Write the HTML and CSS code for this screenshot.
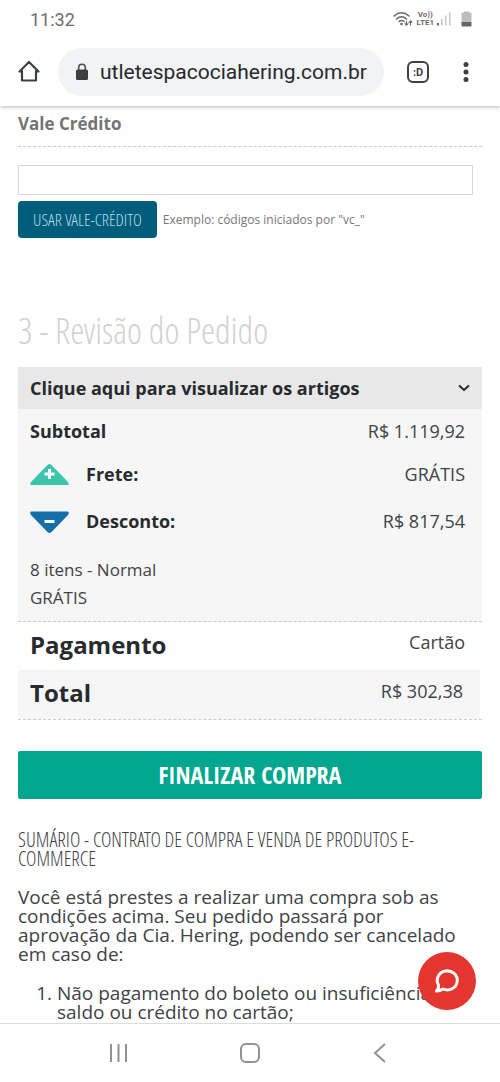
FILE: index.html
```html
<!DOCTYPE html>
<html lang="pt-BR">
<head>
<meta charset="utf-8">
<meta name="viewport" content="width=device-width, initial-scale=1">
<title>Revisão do Pedido</title>
<link rel="stylesheet" href="styles.css">
</head>
<body>
<div class="screen">
  <header class="browser">
    <div class="status">
      <span class="clock">11:32</span>
      <div class="indicators">
        <svg class="wifi" width="20" height="16" viewBox="0 0 20 16" fill="none" stroke="#686868" stroke-width="1.5" stroke-linecap="round">
          <path d="M1 5Q8.500-1.500 16 5M3.500 8Q8.500 3.500 13.500 8M6 10.500Q8.500 8.500 11 10.500"/>
          <circle cx="8.500" cy="13" r=".6" fill="#686868"/>
          <path stroke-width="1.100" d="M13.500 10v4M12 12.600l1.500 1.600 1.500-1.600M17.500 14v-4M16 11.400l1.500-1.600 1.500 1.600"/>
        </svg>
        <div class="carrier"><span>Vo))</span><span>LTE1</span></div>
        <svg class="signal" width="14" height="16" viewBox="0 0 14 16">
          <path fill="#686868" d="M0 12h2v2.500H0z"/>
          <path fill="#c8c8c8" d="M4 8h1.500v6.500H4zM8 4.500h1.500v10H8zM12 1h1.500v13.500H12z"/>
        </svg>
        <svg class="battery" width="11" height="16" viewBox="0 0 11 16">
          <path fill="#bdbdbd" d="M3 1.500V.5h5v1h1.500q1 0 1 1V11H.5V2.500q0-1 1-1z"/>
          <path fill="#666" d="M.5 11h10v3.500q0 1-1 1h-8q-1 0-1-1z"/>
        </svg>
      </div>
    </div>
    <div class="toolbar">
      <button class="icon-button home" aria-label="Página inicial">
        <svg width="24" height="24" viewBox="0 0 24 24" fill="none" stroke="#3c4043" stroke-width="2.200" stroke-linejoin="round" stroke-linecap="round"><path d="M5 11v9.500h14V11M2.500 11.500L12 2l9.500 9.500H19M5 11.500H2.500"/></svg>
      </button>
      <div class="address">
        <svg width="14" height="18" viewBox="0 0 14 18"><path fill="none" stroke="#4b4e52" stroke-width="1.600" d="M3.700 7V4.600a3.300 3.300 0 0 1 6.600 0V7"/><rect x="1" y="6.500" width="12" height="10.500" rx="1.500" fill="#3c4043"/></svg>
        <span class="url">utletespacociahering.com.br</span>
      </div>
      <button class="icon-button tabs" aria-label="Abas"><span>:D</span></button>
      <button class="icon-button more" aria-label="Mais opções">
        <svg width="6" height="22" viewBox="0 0 6 22" fill="#3c4043"><circle cx="3" cy="3.500" r="2.500"/><circle cx="3" cy="11" r="2.500"/><circle cx="3" cy="18.500" r="2.500"/></svg>
      </button>
    </div>
  </header>

  <main class="page">
    <form class="voucher">
      <label class="voucher-title" for="voucher">Vale Crédito</label>
      <input class="voucher-input" id="voucher" type="text">
      <div class="voucher-row">
        <button class="voucher-button" type="button">USAR VALE-CRÉDITO</button>
        <span class="hint">Exemplo: códigos iniciados por "vc_"</span>
      </div>
    </form>

    <h2 class="section-title">3 - Revisão do Pedido</h2>
    <section class="summary">
      <button class="expander">
        <span>Clique aqui para visualizar os artigos</span>
        <svg width="12" height="8" viewBox="0 0 12 8" fill="none" stroke="#272b2e" stroke-width="2"><path d="M1 1.500l5 4.500 5-4.500"/></svg>
      </button>
      <div class="costs">
        <div class="cost"><strong>Subtotal</strong><span>R$ 1.119,92</span></div>
        <div class="cost shipping">
          <svg width="39" height="24" viewBox="0 0 39 24"><path fill="#3dc4ad" d="M17.500 3q2-2 4 0L38 20q1.500 2.500 0 3H1q-1.500-.5 0-3z"/><path stroke="#fff" stroke-width="3" d="M14.500 12h10M19.500 7v10"/></svg>
          <strong>Frete:</strong><span>GRÁTIS</span>
        </div>
        <div class="cost discount">
          <svg width="39" height="24" viewBox="0 0 39 24"><path fill="#146ea8" d="M17.500 23q2 2 4 0L38 6q1.500-2.500 0-3.500H1q-1.500 1 0 3.500z"/><path stroke="#fff" stroke-width="3" d="M14.500 12.500h10"/></svg>
          <strong>Desconto:</strong><span>R$ 817,54</span>
        </div>
        <p class="delivery">8 itens - Normal<br>GRÁTIS</p>
      </div>
      <div class="result"><strong>Pagamento</strong><span>Cartão</span></div>
      <div class="total-wrap"><div class="result total"><strong>Total</strong><span>R$ 302,38</span></div></div>
    </section>

    <button class="submit">FINALIZAR COMPRA</button>

    <article class="contract">
      <h3>SUMÁRIO - CONTRATO DE COMPRA E VENDA DE PRODUTOS E-COMMERCE</h3>
      <p>Você está prestes a realizar uma compra sob as condições acima. Seu pedido passará por aprovação da Cia. Hering, podendo ser cancelado em caso de:</p>
      <ol><li>Não pagamento do boleto ou insuficiência de saldo ou crédito no cartão;</li></ol>
    </article>
  </main>

  <button class="chat" aria-label="Abrir chat">
    <svg width="26" height="26" viewBox="0 0 26 26" fill="none" stroke="#fff" stroke-width="3" stroke-linejoin="round"><path d="M4.500 17A10 9.500 0 1 1 9 21Q6 23 2.500 23Q5 20.500 4.500 17z"/></svg>
  </button>

  <nav class="system">
    <button aria-label="Recentes"><svg width="20" height="20" viewBox="0 0 20 20" stroke="#929292" stroke-width="2"><path d="M2 1v18M9.500 1v18M17 1v18"/></svg></button>
    <button aria-label="Início"><svg width="20" height="20" viewBox="0 0 20 20" fill="none" stroke="#929292" stroke-width="2"><rect x="1" y="1" width="18" height="18" rx="5"/></svg></button>
    <button aria-label="Voltar"><svg width="20" height="20" viewBox="0 0 20 20" fill="none" stroke="#929292" stroke-width="2"><path d="M14 1L4 10l10 9"/></svg></button>
  </nav>
</div>
</body>
</html>
```
FILE: styles.css
```css
* { box-sizing: border-box; }
body { margin: 0; background: #fff; color: #404346; font-family: "Open Sans", sans-serif; }
button { border: 0; padding: 0; background: none; font: inherit; color: inherit; cursor: pointer; }
svg { display: block; flex: none; }
h2, h3, p, ol { margin: 0; }
.screen { position: relative; display: flex; flex-direction: column; height: 100vh; overflow: hidden; }

.browser { position: relative; z-index: 1; flex: none; background: #fff; box-shadow: 0 1px 4px rgba(0, 0, 0, .3); font-family: Roboto, sans-serif; }
.status { display: flex; align-items: center; justify-content: space-between; height: 38px; padding: 0 28px 0 30px; color: #6d6d6d; }
.clock { font-size: 18px; }
.indicators { display: flex; align-items: center; }
.carrier { display: flex; flex-direction: column; align-items: center; margin: 0 3px 0 4px; font-size: 8px; line-height: 8px; font-weight: 700; }
.battery { margin-left: 10px; }
.toolbar { display: flex; align-items: center; height: 68px; padding: 0 31px 0 17px; }
.icon-button { display: grid; place-items: center; flex: none; }
.address { display: flex; align-items: center; flex: 1; gap: 11px; height: 48px; margin-left: 17px; padding: 0 11px 0 17px; border-radius: 24px; background: #f1f3f5; }
.url { flex: 1; font-size: 21px; line-height: 28px; color: #26292d; white-space: nowrap; }
.tabs { width: 22px; height: 22px; margin: 0 34px 0 23px; border: 2px solid #3c4043; border-radius: 6px; font-size: 11px; font-weight: 700; color: #3c4043; }

.page { flex: 1; min-height: 0; overflow: hidden; padding: 8px 18px 0; }
.voucher-title { display: block; padding-bottom: 12px; border-bottom: 1px dashed #ccc; font-size: 17px; line-height: 20px; font-weight: 700; color: #747474; }
.voucher-input { display: block; width: calc(100% - 9px); height: 30px; margin: 18px 0 6px; border: 1px solid #d8d8d8; background: #fff; }
.voucher-row { display: flex; align-items: center; gap: 6px; }
.voucher-button { height: 37px; padding: 0 15px; border-radius: 4px; background: #005c7b; color: #b5dbe7; font: 300 17px/20px "Open Sans Condensed Light", "Open Sans Condensed", "Open Sans", sans-serif; }
.hint { font-size: 12px; color: #777; }
.section-title { margin: 69px 0 12px; font: 300 36px/48px "Open Sans Condensed Light", "Open Sans Condensed", "Open Sans", sans-serif; color: #d2d2d2; white-space: nowrap; }
.expander { display: flex; align-items: center; justify-content: space-between; width: 100%; height: 42px; padding: 0 12px; background: #e8e8e8; font-size: 18px; font-weight: 700; color: #272b2e; }
.costs { padding: 0 17px 9px 12px; border-bottom: 1px dashed #ccc; background: #f6f6f6; }
.cost { display: flex; align-items: center; height: 44px; font-size: 18px; }
.cost span, .result span { margin-left: auto; }
.cost strong { font-size: 18px; color: #272b2e; }
.cost svg { margin-right: 17px; }
.shipping { height: 41px; }
.discount { height: 54px; }
.delivery { padding-top: 8px; font-size: 17px; line-height: 28px; }
.result { display: flex; align-items: center; height: 48px; padding: 0 17px 4px 12px; font-size: 18px; }
.result span { padding-bottom: 4px; }
.result strong { font-size: 24px; color: #272b2e; }
.total-wrap { padding-right: 2px; border-bottom: 1px dashed #ccc; }
.total { height: 49px; background: #f6f6f6; }
.submit { display: block; width: 100%; height: 48px; margin: 31px 0; border-radius: 2px; background: #00a78e; color: #fff; font: 700 24px/30px "Open Sans Condensed", "Open Sans", sans-serif; }
.contract { font-size: 19px; line-height: 19px; }
.contract h3 { margin-bottom: 20px; font: 300 20px/19px "Open Sans Condensed Light", "Open Sans Condensed", "Open Sans", sans-serif; }
.contract p { padding-right: 12px; }
.contract ol { margin-top: 20px; padding-left: 39px; }

.chat { position: absolute; right: 24px; bottom: 72px; display: grid; place-items: center; width: 58px; height: 58px; border-radius: 50%; background: #e5352f; }
.system { display: flex; align-items: center; justify-content: space-around; flex: none; height: 59px; padding: 0 54px; border-top: 1px solid #dcdcdc; background: #fff; }
```
